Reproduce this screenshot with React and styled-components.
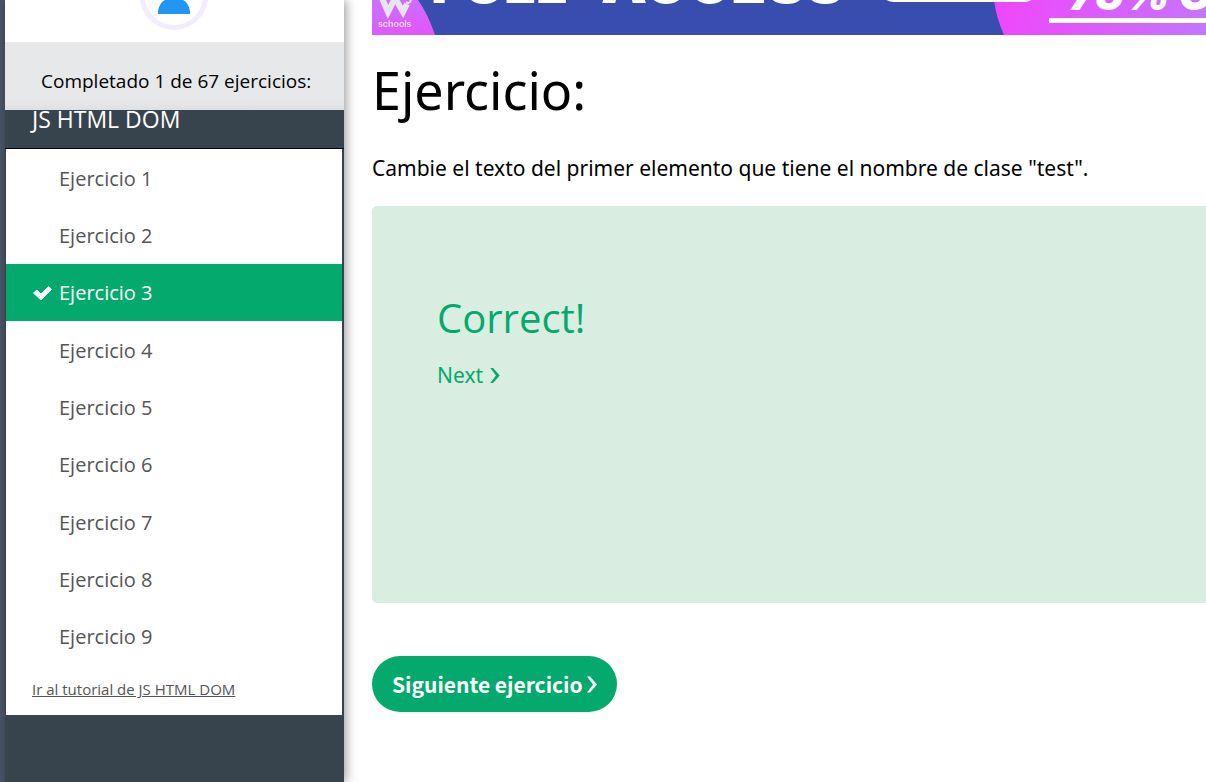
import React from "react";
import styled, { createGlobalStyle } from "styled-components";

const Global = createGlobalStyle`
  * { box-sizing: border-box; }
  body { margin: 0; background: #fff; color: #000; font-family: "Open Sans", "Noto Sans", sans-serif; }
  h1, h2, h3, p, ul { margin: 0; padding: 0; font-weight: 400; }
`;
const Page = styled.div`
  display: grid;
  grid-template-columns: 5px 339px minmax(0, 1fr);
  min-height: 100vh;
`;
const Edge = styled.div`background: #4a5568;`;
const Sidebar = styled.aside`
  background: #38444d;
  box-shadow: 2px 0 10px rgba(0, 0, 0, 0.4);
`;
const Avatar = styled.div`
  display: flex;
  justify-content: center;
  height: 42px;
  padding-right: 1px;
  overflow: hidden;
  background: #fff;
`;
const Progress = styled.p`
  height: 68px;
  padding-top: 26px;
  padding-left: 36px;
  background: linear-gradient(#e7e8ea 60px, #dddfe1 68px);
  font-size: 19px;
  line-height: 26px;
  white-space: nowrap;
`;
const SectionTitle = styled.h2`
  height: 39px;
  padding-left: 27px;
  border-bottom: 1px solid #000;
  color: #fff;
  font-size: 23px;
  line-height: 18px;
`;
const Panel = styled.div`
  margin: 0 2px 0 1px;
  padding-bottom: 14px;
  background: #fff;
`;
const List = styled.ul`
  display: grid;
  grid-auto-rows: 1fr;
  min-height: 516px;
  list-style: none;
`;
const Exercise = styled.a`
  display: flex;
  align-items: center;
  height: 100%;
  padding: 2px 26px 0;
  background: ${(p) => (p.$active ? "#04aa6d" : "transparent")};
  color: ${(p) => (p.$active ? "#fff" : "#555")};
  font-size: 20px;
  line-height: 28px;
  text-decoration: none;
`;
const Mark = styled.span`
  display: flex;
  width: 27px;
`;
const TutorialLink = styled.a`
  display: block;
  padding: 12px 26px 0;
  color: #555;
  font-size: 15px;
  line-height: 24px;
`;
const Main = styled.main`padding-left: 28px;`;
const Banner = styled.svg`
  display: block;
  width: 100%;
  height: 35px;
  overflow: hidden;
`;
const BannerText = styled.text`
  fill: ${(p) => p.$tone || "#fff"};
  font-family: Inter, sans-serif;
  font-size: ${(p) => p.$size}px;
  font-weight: ${(p) => p.$weight || 900};
  font-style: ${(p) => (p.$slanted ? "italic" : "normal")};
`;
const Title = styled.h1`
  margin-top: 18px;
  font-family: "Noto Sans", sans-serif;
  font-size: 52px;
  line-height: 74px;
`;
const Task = styled.p`
  margin-top: 27px;
  font-family: "Noto Sans", sans-serif;
  font-size: 21px;
  line-height: 28px;
`;
const Result = styled.section`
  height: 397px;
  margin-top: 24px;
  padding: 83px 65px;
  border-radius: 5px 0 0 5px;
  background: #d9eee1;
  color: #04aa6d;
`;
const ResultTitle = styled.h3`
  font-size: 40px;
  line-height: 58px;
`;
const Next = styled.a`
  display: inline-flex;
  align-items: center;
  gap: 7px;
  margin-top: 14px;
  color: inherit;
  font-family: "Noto Sans", sans-serif;
  font-size: 21px;
  line-height: 28px;
  text-decoration: none;
`;
const NextButton = styled.button`
  display: flex;
  align-items: center;
  gap: 4px;
  height: 56px;
  margin-top: 53px;
  padding: 0 20px;
  border: 0;
  border-radius: 28px;
  background: #04aa6d;
  color: #fff;
  font-family: "Noto Sans CJK SC", sans-serif;
  font-size: 21px;
  font-weight: 700;
  line-height: 32px;
`;

const Chevron = ({ h }) => (
  <svg width="10" height={h} viewBox="0 0 10 16" fill="currentColor" aria-hidden="true">
    <path d="M0 0H3L10 8L3 16H0L6 8Z" />
  </svg>
);

const exercises = [1, 2, 3, 4, 5, 6, 7, 8, 9];

export default function App() {
  return (
    <>
      <Global />
      <Page>
        <Edge />
        <Sidebar>
          <Avatar>
            <svg width="68" height="42" viewBox="0 0 68 42" aria-hidden="true">
              <circle cx="34" cy="-4" r="31.5" fill="none" stroke="#f3ecff" strokeWidth="5" />
              <path d="M18 14V11Q20 -2 34 -2Q48 -2 50 11V14Z" fill="#2196f3" />
            </svg>
          </Avatar>
          <Progress>Completado 1 de 67 ejercicios:</Progress>
          <SectionTitle>JS HTML DOM</SectionTitle>
          <Panel>
            <List>
              {exercises.map((n) => (
                <li key={n}>
                  <Exercise href="#" $active={n === 3}>
                    <Mark>
                      {n === 3 && (
                        <svg width="21" height="16" viewBox="0 0 21 16" aria-hidden="true">
                          <path d="M1.5 8L5 5L9 9L16.5 1.5L19.5 4.5L9 15Z" fill="#fff" stroke="#fff" strokeLinejoin="round" />
                        </svg>
                      )}
                    </Mark>
                    Ejercicio {n}
                  </Exercise>
                </li>
              ))}
            </List>
            <TutorialLink href="#">Ir al tutorial de JS HTML DOM</TutorialLink>
          </Panel>
        </Sidebar>
        <Main>
          <Banner>
            <defs>
              <linearGradient id="offer" gradientUnits="userSpaceOnUse" x1="624" y1="0" x2="850" y2="50">
                <stop offset="0" stopColor="#f046fb" />
                <stop offset="1" stopColor="#c07aff" />
              </linearGradient>
              <linearGradient id="brand" x1="0" y1="0" x2="0.4" y2="1">
                <stop offset="0" stopColor="#c874fc" />
                <stop offset="1" stopColor="#e058fb" />
              </linearGradient>
            </defs>
            <rect width="100%" height="35" fill="#384dad" />
            <path d="M0 0H46Q56 14 63 35H0Z" fill="url(#brand)" />
            <path d="M622 0Q624 17 632 35H3000V0Z" fill="url(#offer)" />
            <path d="M9 -4L16 12L23 -2L31 12L35 4" fill="none" stroke="#e9e4ee" strokeWidth="6" />
            <path d="M34 2Q38 5 39 -1" fill="none" stroke="#e9e4ee" strokeWidth="2" />
            <BannerText x="6" y="27" $size={9} $weight={500} $tone="#ece0f2">schools</BannerText>
            <BannerText x="59" y="3" $size={56}>FULL</BannerText>
            <BannerText x="229" y="3" $size={58}>ACCESS</BannerText>
            <rect x="507" y="-28" width="160" height="30" rx="15" fill="#fff" />
            <BannerText x="697" y="10" $size={44} $slanted>75% OFF</BannerText>
            <rect x="677" y="18" width="100%" height="5" fill="#fff" />
          </Banner>
          <Title>Ejercicio:</Title>
          <Task>Cambie el texto del primer elemento que tiene el nombre de clase "test".</Task>
          <Result>
            <ResultTitle>Correct!</ResultTitle>
            <Next href="#">Next <Chevron h={15} /></Next>
          </Result>
          <NextButton type="button">Siguiente ejercicio <Chevron h={17} /></NextButton>
        </Main>
      </Page>
    </>
  );
}
